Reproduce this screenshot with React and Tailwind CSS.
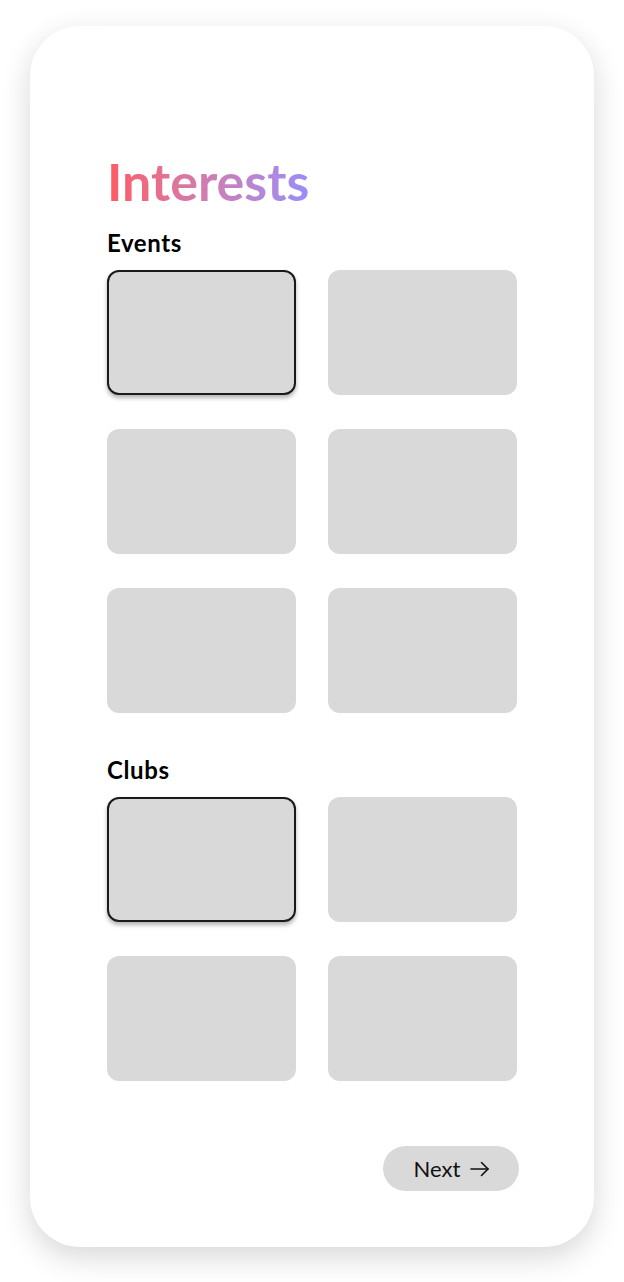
import React from 'react'

const Tile = ({ selected }) => (
  <div
    className={
      selected
        ? 'h-[125px] rounded-[12px] border-2 border-[#1a1a1a] bg-[#d9d9d9] shadow-[0_3px_4px_rgba(0,0,0,0.3)]'
        : 'h-[125px] rounded-[12px] bg-[#d9d9d9]'
    }
  />
)

const Section = ({ title, count, className }) => (
  <div className={className}>
    <h2 className="text-[24px] font-bold leading-[24px] tracking-[0.6px] text-black">{title}</h2>
    <div className="mt-[15px] grid grid-cols-[189px_189px] gap-x-8 gap-y-[34px]">
      {Array.from({ length: count }).map((_, i) => (
        <Tile key={i} selected={i === 0} />
      ))}
    </div>
  </div>
)

export default function App() {
  return (
    <div className="flex min-h-screen justify-center bg-white pt-[26px] font-['Lato','Open_Sans',sans-serif]">
      <div className="flex h-[1221px] w-[564px] flex-col rounded-[50px] bg-white pl-[77px] pr-[75px] pt-[129px] shadow-[0_10px_30px_rgba(0,0,0,0.16)]">
        <h1 className="w-fit bg-gradient-to-r from-[#fd5a62] to-[#9a8cf9] bg-clip-text text-[52px] font-bold leading-[52px] text-transparent">
          Interests
        </h1>

        <Section title="Events" count={6} className="mt-[24px]" />
        <Section title="Clubs" count={4} className="mt-[45px]" />

        <button className="mt-[65px] flex h-[45px] w-[136px] items-center justify-center gap-[10px] self-end rounded-full bg-[#d9d9d9] pl-[2px] text-[22px] leading-none text-[#111]">
          <span>Next</span>
          <svg width="20" height="16" viewBox="0 0 20 16" fill="none" stroke="currentColor" strokeWidth="1.6" strokeLinecap="round" strokeLinejoin="round">
            <path d="M1 8h17" />
            <path d="M11.5 1.5L18 8l-6.5 6.5" />
          </svg>
        </button>
      </div>
    </div>
  )
}
